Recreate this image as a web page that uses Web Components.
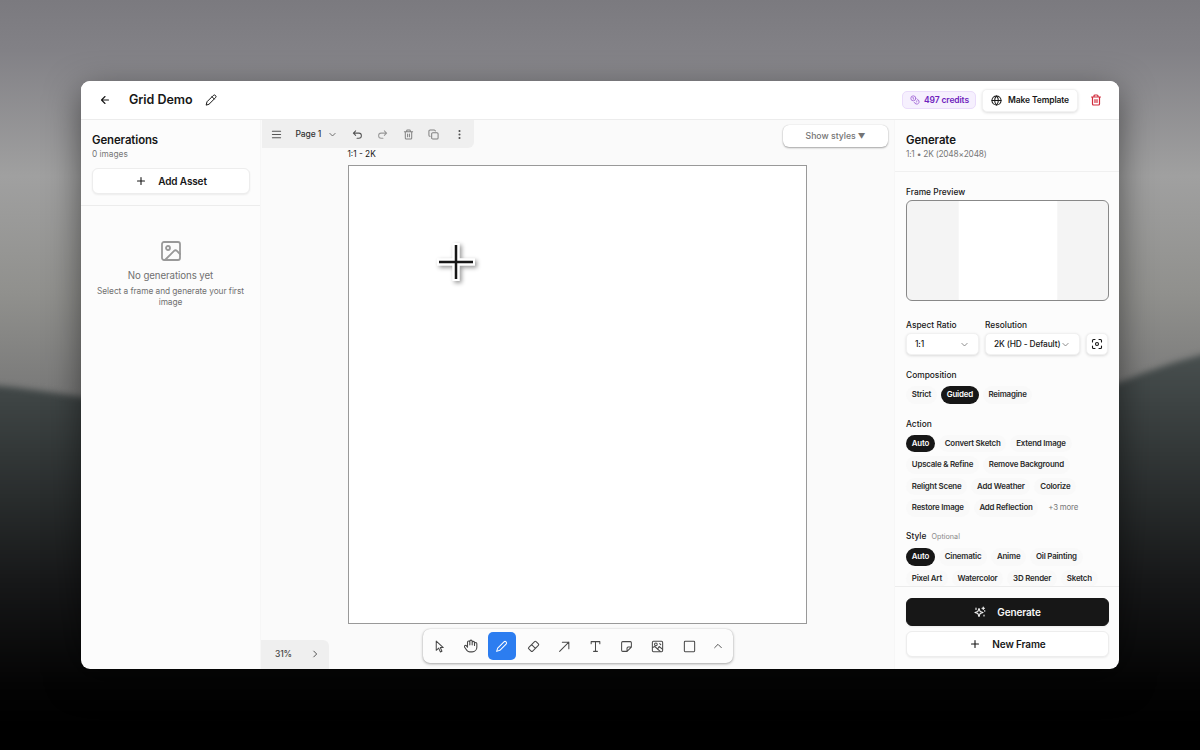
<!DOCTYPE html>
<html lang="en">
<head>
<meta charset="utf-8">
<title>Grid Demo</title>
<style>
  body {
    margin: 0;
    width: 1200px;
    height: 750px;
    overflow: hidden;
    font-family: Inter, "Liberation Sans", sans-serif;
    color: #171717;
  }
</style>
</head>
<body>
<desk-backdrop>
  <app-window>
    <app-header slot="header" name="Grid Demo" credits="497 credits"></app-header>
    <generations-panel slot="left"></generations-panel>
    <canvas-area slot="main"></canvas-area>
    <generate-panel slot="right"></generate-panel>
  </app-window>
</desk-backdrop>

<script>
const icons = {
  back: '<path d="m12 19-7-7 7-7M19 12H5"/>',
  pencil: '<path d="M2.500 21.500 4 15.500 16.500 3a2.800 2.800 0 0 1 4.500 4.500L8.500 20zM14 5.500l4.500 4.500"/>',
  coins: '<circle cx="8" cy="8" r="6"/><path d="M18.1 10.4A6 6 0 1 1 10.3 18M7 6h1v4M16.7 13.9l.7.7-2.8 2.8"/>',
  globe: '<circle cx="12" cy="12" r="10"/><path d="M12 2a14.5 14.5 0 0 0 0 20 14.5 14.5 0 0 0 0-20M2 12h20"/>',
  trash: '<path d="M3 6h18M19 6v14a2 2 0 0 1-2 2H7a2 2 0 0 1-2-2V6M8 6V4a2 2 0 0 1 2-2h4a2 2 0 0 1 2 2v2M10 11v6M14 11v6"/>',
  plus: '<path d="M5 12h14M12 5v14"/>',
  image: '<rect x="3" y="3" width="18" height="18" rx="2"/><circle cx="9" cy="9" r="2"/><path d="m21 15-3.1-3.1a2 2 0 0 0-2.8 0L6 21"/>',
  menu: '<path d="M3 5h18M3 12h18M3 19h18"/>',
  down: '<path d="m5 9 7 7 7-7"/>',
  up: '<path d="m4 16 8-8 8 8"/>',
  right: '<path d="m9 5 7 7-7 7"/>',
  undo: '<path d="M8 4 3 9l5 5M3 9h12a5.5 5.5 0 0 1 0 11h-4"/>',
  redo: '<path d="m16 4 5 5-5 5M21 9H9a5.500 5.500 0 0 0 0 11h4"/>',
  copy: '<rect x="8" y="8" width="14" height="14" rx="2.500"/><path d="M4.500 16A2.500 2.500 0 0 1 2 13.500v-9A2.500 2.500 0 0 1 4.500 2h9A2.500 2.500 0 0 1 16 4.500"/>',
  dots: '<g fill="currentColor"><circle cx="12" cy="4.500" r="1.200"/><circle cx="12" cy="12" r="1.200"/><circle cx="12" cy="19.500" r="1.200"/></g>',
  focus: '<circle cx="12" cy="12" r="3"/><path d="M3 8V5a2 2 0 0 1 2-2h3M16 3h3a2 2 0 0 1 2 2v3M21 16v3a2 2 0 0 1-2 2h-3M8 21H5a2 2 0 0 1-2-2v-3"/>',
  sparkles: '<path d="M10 5 12.200 10.800 18 13l-5.800 2.200L10 21l-2.200-5.800L2 13l5.800-2.200zM18.500 2v5M16 4.500h5M21.500 9v1.500M4 4v3M20 18v2"/>',
  cursor: '<path d="M6 2v17l4.500-4 3 7 3-1.300-3-6.700H19z"/>',
  hand: '<path d="M18 11V6a2 2 0 0 0-4 0v4-6a2 2 0 0 0-4 0v6-4.500a2 2 0 0 0-4 0V14l-1.700-2.200a2 2 0 0 0-3.200 2.400l4.200 5.800a6 6 0 0 0 4.700 2H14a8 8 0 0 0 8-8V8a2 2 0 0 0-4 0v3"/>',
  draw: '<path d="M3 21 5 15 16.500 3.500a2.800 2.800 0 0 1 4 4L9 19z"/>',
  eraser: '<path d="M3 14 14 3a2 2 0 0 1 2.800 0L21 7.200a2 2 0 0 1 0 2.800L10 21H8l-5-5a1.500 1.500 0 0 1 0-2M8.500 8.500l7 7"/>',
  arrow: '<path d="M3 21 20 4M8 4h12v12"/>',
  text: '<path d="M4 7V3h16v4M12 3v18M8.500 21h7"/>',
  note: '<path d="M21 13V5a2 2 0 0 0-2-2H5a2 2 0 0 0-2 2v14a2 2 0 0 0 2 2h8l8-8h-6a2 2 0 0 0-2 2v6"/>',
  media: '<rect x="2.500" y="2.500" width="19" height="19" rx="2"/><circle cx="9" cy="8" r="2.500"/><path d="m3 14 4-2 10 9M12 17l3-5 6 5M16 6.500l2 2"/>',
  square: '<rect x="2.500" y="2.500" width="19" height="19" rx="1.500"/>'
}

// small helper so every element only brings its markup
function define(name, render) {
  customElements.define(name, class extends HTMLElement {
    connectedCallback() {
      this.attachShadow({mode: "open"});
      this.shadowRoot.innerHTML = `<style>* { box-sizing: border-box; }</style>` + render(this);
    }
  })
}

define("ui-icon", el => `
  <style>
    :host { display: block; flex: none; width: ${el.getAttribute("size") || 12}px; height: ${el.getAttribute("size") || 12}px; }
    svg { display: block; width: 100%; height: 100%; }
  </style>
  <svg viewBox="0 0 24 24" fill="none" stroke="currentColor" stroke-width="${el.getAttribute("weight") || 2.2}" stroke-linecap="round" stroke-linejoin="round">${icons[el.getAttribute("name")]}</svg>
`)

define("desk-backdrop", () => `
  <style>
    :host { display: grid; place-items: start center; position: relative; width: 1200px; height: 750px; padding-top: 81px; box-sizing: border-box; overflow: hidden; background: #000; }
    svg { position: absolute; inset: 0; }
    slot { display: block; position: relative; }
  </style>
  <svg width="1200" height="750">
    <defs>
      <linearGradient id="sky" x2="0" y2="1">
        <stop offset="0" stop-color="#7b7a7f"/><stop offset=".12" stop-color="#828186"/>
        <stop offset=".42" stop-color="#a0a0a0"/><stop offset=".7" stop-color="#90908d"/><stop offset="1" stop-color="#737373"/>
      </linearGradient>
      <linearGradient id="hill" x2="0" y2="1">
        <stop offset="0" stop-color="#495050"/><stop offset=".25" stop-color="#323737"/>
        <stop offset=".55" stop-color="#171819"/><stop offset=".8" stop-color="#040404"/><stop offset=".9" stop-color="#000"/>
      </linearGradient>
      <filter id="soft" color-interpolation-filters="sRGB"><feGaussianBlur stdDeviation="3"/></filter>
    </defs>
    <rect width="1200" height="420" fill="url(#sky)"/>
    <path d="M-20 384 Q30 388 100 400 L1080 400 Q1150 366 1220 350 V770 H-20Z" fill="url(#hill)" filter="url(#soft)"/>
  </svg>
  <slot></slot>
`)

define("app-window", () => `
  <style>
    :host {
      display: grid; grid-template: 39px 548.5px / 180px 633px 225px;
      width: 1038px; height: 587.5px; border-radius: 9px; overflow: hidden; background: #fcfcfc;
      box-shadow: 0 10px 34px rgba(0,0,0,.5);
    }
    .header { grid-column: 1 / -1; }
    div { min-width: 0; min-height: 0; display: grid; }
  </style>
  <div class="header"><slot name="header"></slot></div>
  <div><slot name="left"></slot></div>
  <div><slot name="main"></slot></div>
  <div><slot name="right"></slot></div>
`)

define("app-header", el => `
  <style>
    :host { display: flex; align-items: center; padding: 0 17px 0 18px; background: #fff; border-bottom: 1px solid #ececec; }
    h1 { margin: 0 12px 0 18px; font-size: 12.5px; font-weight: 600; line-height: 16px; letter-spacing: -.05px; }
    .actions { margin-left: auto; display: flex; align-items: center; }
    .credits, .template { display: flex; align-items: center; font-size: 8.500px; letter-spacing: -.12px; white-space: nowrap; border-radius: 5px; }
    .credits { height: 18px; width: 74px; padding-left: 7px; gap: 4px; color: #6f22bd; background: #f6f0fe; border: 1px solid #eadcfb; font-weight: 600; }
    .credits ui-icon { color: #a56cd8; }
    .template { height: 23px; width: 96px; margin: 0 12px 0 6px; padding-left: 8px; gap: 6px; border: 1px solid #f2f2f2; background: #fff; font-weight: 600; box-shadow: 0 1px 3px #0002; }
    .trash { color: #d22c3c; }
  </style>
  <ui-icon name="back" size="12"></ui-icon>
  <h1>${el.getAttribute("name")}</h1>
  <ui-icon name="pencil" size="12" weight="2"></ui-icon>
  <div class="actions">
    <div class="credits"><ui-icon name="coins" size="10"></ui-icon><span>${el.getAttribute("credits")}</span></div>
    <div class="template"><ui-icon name="globe" size="11"></ui-icon><span>Make Template</span></div>
    <ui-icon class="trash" name="trash" size="12" weight="2.400"></ui-icon>
  </div>
`)

define("panel-title", el => `
  <style>
    :host { display: block; }
    h2 { margin: 0; font-size: 11.400px; line-height: 16px; font-weight: 600; letter-spacing: -.1px; }
    p { margin: 0; font-size: 8.300px; line-height: 12px; letter-spacing: ${el.getAttribute("spacing") || 0}px; color: #777; }
  </style>
  <h2><slot></slot></h2>
  <p>${el.getAttribute("note")}</p>
`)

define("wide-button", el => `
  <style>
    :host { display: flex; align-items: center; justify-content: center; gap: 11px; height: 26px; font-size: 10px; letter-spacing: -.13px; font-weight: 600; border: 1px solid #ededed; border-radius: 6px; background: #fff; box-shadow: 0 1px 2px #0001; }
    :host([dark]) { height: 28.5px; background: #171717; border-color: #171717; color: #f8f8f8; }
  </style>
  <ui-icon name="${el.getAttribute("icon")}" size="12"></ui-icon><slot></slot>
`)

define("generations-panel", () => `
  <style>
    :host { display: block; border-right: 1px solid #f6f6f6; }
    .top { padding: 12px 10px 11px 11px; border-bottom: 1px solid #ececec; }
    wide-button { margin-top: 8px; }
    .empty { display: flex; flex-direction: column; align-items: center; padding-top: 33px; color: #999; text-align: center; }
    .empty b { margin-top: 5px; font-size: 9.700px; line-height: 16px; letter-spacing: -.08px; font-weight: 400; color: #707070; }
    .empty p { width: 160px; margin: 1.500px 0 0; font-size: 8.300px; line-height: 11px; letter-spacing: -.04px; color: #707070; }
  </style>
  <div class="top">
    <panel-title note="0 images">Generations</panel-title>
    <wide-button icon="plus">Add Asset</wide-button>
  </div>
  <div class="empty">
    <ui-icon name="image" size="24" weight="1.800"></ui-icon>
    <b>No generations yet</b>
    <p>Select a frame and generate your first image</p>
  </div>
`)

define("page-bar", () => `
  <style>
    :host { display: flex; align-items: center; width: 212px; height: 28px; padding-left: 8.500px; background: #efefef; border-radius: 0 0 6px 0; color: #555; }
    span { margin: 0 6px 0 14px; font-size: 8.500px; letter-spacing: -.1px; font-weight: 500; color: #333; width: 26px; white-space: nowrap; }
    .tools { display: flex; gap: 14.500px; margin-left: 15px; }
    .dim { color: #999; }
    .mid { color: #808080; }
  </style>
  <ui-icon name="menu" size="11"></ui-icon>
  <span>Page 1</span>
  <ui-icon name="down" size="9"></ui-icon>
  <div class="tools">
    <ui-icon name="undo" size="11"></ui-icon>
    <ui-icon class="dim" name="redo" size="11"></ui-icon>
    <ui-icon class="mid" name="trash" size="11"></ui-icon>
    <ui-icon class="mid" name="copy" size="11"></ui-icon>
    <ui-icon name="dots" size="11"></ui-icon>
  </div>
`)

define("tool-bar", () => `
  <style>
    :host { display: flex; align-items: center; width: 310px; height: 34px; padding: 0 3px; gap: 3.200px; background: #fcfcfc; border-radius: 7px; box-shadow: 0 1px 3px #0005, 0 0 1px #0003; color: #484848; }
    i { display: grid; place-items: center; flex: none; width: 28px; height: 28px; border-radius: 5px; }
    .on { background: #2c7df0; color: #fff; }
  </style>
  ${["cursor", "hand", "draw", "eraser", "arrow", "text", "note", "media", "square"].map(name =>
    `<i class="${name == "draw" ? "on" : ""}"><ui-icon name="${name}" size="${name == "hand" ? 14 : 13}" weight="1.900"></ui-icon></i>`).join("")}
  <i style="width: 24px"><ui-icon name="up" size="10"></ui-icon></i>
`)

define("canvas-area", () => `
  <style>
    :host { display: block; position: relative; background: #fafafa; overflow: hidden; }
    page-bar { position: absolute; left: 1px; top: 0; }
    .styles { position: absolute; left: 522px; top: 5px; width: 105px; height: 22px; display: flex; align-items: center; justify-content: center; gap: 2px; font-size: 8.700px; font-weight: 500; color: #747474; background: #fff; border-radius: 6px; box-shadow: 0 1px 2px #0005, 0 0 1px #0003; }
    .styles span { font-size: 7.500px; }
    .frame { position: absolute; left: 87px; top: 45px; width: 459px; height: 459px; border: 1px solid #999; background: #fff; }
    .name { position: absolute; left: 86.500px; top: 28px; font-size: 8.300px; line-height: 12px; }
    .cross { position: absolute; left: 168.500px; top: 116px; filter: drop-shadow(2px 2px 2px #0006); }
    .zoom { position: absolute; left: 0; bottom: 0; display: flex; align-items: center; gap: 18px; width: 68px; height: 28.500px; padding-left: 14px; font-size: 8.500px; letter-spacing: -.2px; font-weight: 500; background: #efefef; color: #444; border-radius: 0 6px 0 0; }
    tool-bar { position: absolute; left: 161.500px; top: 509px; }
  </style>
  <div class="frame"></div>
  <div class="name">1:1 - 2K</div>
  <page-bar></page-bar>
  <div class="styles">Show styles <span>▼</span></div>
  <svg class="cross" width="52" height="52" fill="none">
    <path d="M26 7v38M7 26h38" stroke="#fff" stroke-width="7.500"/>
    <path d="M26 9v34M9 26h34" stroke="#171717" stroke-width="2.500"/>
  </svg>
  <div class="zoom"><span>31%</span><ui-icon name="right" size="10"></ui-icon></div>
  <tool-bar></tool-bar>
`)

define("select-box", el => `
  <style>
    :host { display: block; }
    label { display: block; font-size: 8.400px; line-height: 12px; font-weight: 500; margin-bottom: 2px; }
    div { display: flex; align-items: center; justify-content: space-between; height: 22px; padding: 0 9px 0 8px; font-size: 8.400px; letter-spacing: -.15px; font-weight: 500; white-space: nowrap; border: 1px solid #f1f1f1; border-radius: 5px; background: #fff; box-shadow: 0 1px 3px #0002; }
    ui-icon { color: #777; }
  </style>
  <label>${el.getAttribute("label")}</label>
  <div><slot></slot><ui-icon name="down" size="9"></ui-icon></div>
`)

// comma separated options, the active one is drawn dark
define("chip-group", el => `
  <style>
    :host { display: block; }
    label { display: block; font-size: 8.400px; line-height: 12px; font-weight: 500; margin-bottom: 5px; }
    small { font-size: 7.200px; font-weight: 400; color: #888; margin-left: 3px; }
    div { display: flex; flex-wrap: wrap; gap: 4px; }
    span { height: 17.600px; line-height: 17.600px; padding: 0 5.800px; font-size: 7.900px; letter-spacing: -.2px; font-weight: 600; white-space: nowrap; border-radius: 9px; background: #f9f9f9; color: #2b2b2b; }
    .on { background: #171717; color: #fff; }
    .more { background: none; color: #777; font-weight: 400; }
  </style>
  <label>${el.getAttribute("label")} ${el.hasAttribute("hint") ? `<small>${el.getAttribute("hint")}</small>` : ""}</label>
  <div>${el.getAttribute("options").split(",").map(option => {
    const kind = option == el.getAttribute("active") ? "on" : option.startsWith("+") ? "more" : "";
    return `<span class="${kind}">${option}</span>`
  }).join("")}</div>
`)

define("generate-panel", () => `
  <style>
    :host { display: flex; flex-direction: column; min-height: 0; border-left: 1px solid #f6f6f6; }
    .top { flex: none; height: 52px; padding: 12px 11px 0; border-bottom: 1px solid #f0f0f0; }
    .body { flex: 1; min-height: 0; overflow: hidden; padding: 14px 10px 0 11px; }
    .label { font-size: 8.400px; line-height: 12px; font-weight: 500; }
    .preview { height: 101px; margin: 2px 0 18px; border: 1.500px solid #888; border-radius: 6px; background: #f4f4f4; display: grid; place-items: stretch center; overflow: hidden; }
    .preview div { width: 98px; background: #fff; box-shadow: 0 0 2px #fff; }
    .row { display: flex; gap: 6px; align-items: flex-end; margin-bottom: 14px; }
    .ratio { width: 73px; }
    .res { width: 95px; }
    .fit { display: grid; place-items: center; width: 22px; height: 22px; border: 1px solid #f1f1f1; border-radius: 5px; background: #fff; box-shadow: 0 1px 3px #0002; }
    chip-group { margin-bottom: 14px; }
    chip-group:last-child { margin-top: -.6px; }
    .foot { flex: none; display: flex; flex-direction: column; gap: 5px; height: 83px; padding: 11px 10px 10px 11px; border-top: 1px solid #ececec; }
  </style>
  <div class="top"><panel-title spacing="-0.2" note="1:1 • 2K (2048×2048)">Generate</panel-title></div>
  <div class="body">
    <div class="label">Frame Preview</div>
    <div class="preview"><div></div></div>
    <div class="row">
      <select-box class="ratio" label="Aspect Ratio">1:1</select-box>
      <select-box class="res" label="Resolution">2K (HD - Default)</select-box>
      <div class="fit"><ui-icon name="focus" size="12"></ui-icon></div>
    </div>
    <chip-group label="Composition" active="Guided" options="Strict,Guided,Reimagine"></chip-group>
    <chip-group label="Action" active="Auto" options="Auto,Convert Sketch,Extend Image,Upscale &amp; Refine,Remove Background,Relight Scene,Add Weather,Colorize,Restore Image,Add Reflection,+3 more"></chip-group>
    <chip-group style="margin-top: -1px" label="Style" hint="Optional" active="Auto" options="Auto,Cinematic,Anime,Oil Painting,Pixel Art,Watercolor,3D Render,Sketch"></chip-group>
  </div>
  <div class="foot">
    <wide-button dark icon="sparkles">Generate</wide-button>
    <wide-button icon="plus">New Frame</wide-button>
  </div>
`)
</script>
</body>
</html>
